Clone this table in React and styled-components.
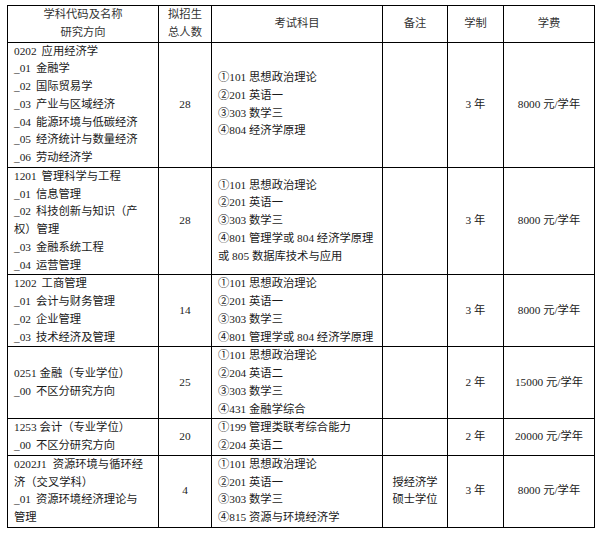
import React from 'react';
import styled, { createGlobalStyle } from 'styled-components';

const GlobalStyle = createGlobalStyle`
  html, body {
    margin: 0;
    padding: 0;
    background: #fff;
  }
  body {
    font-family: "Liberation Serif", "Noto Sans CJK SC", serif;
    color: #1a1a1a;
  }
`;

const Page = styled.div`
  padding: 5px 0 0 7px;
`;

const Table = styled.table`
  border-collapse: collapse;
  table-layout: fixed;
  width: 587px;
  font-size: 11.3px;
  line-height: 17.75px;
`;

const HeadCell = styled.th`
  border: 1px solid #000;
  padding: 0;
  font-weight: normal;
  text-align: center;
  vertical-align: middle;
  color: #333;
  font-family: "Liberation Sans", "Noto Sans CJK SC", sans-serif;
`;

const Cell = styled.td`
  border: 1px solid #000;
  padding: ${(p) => (p.$left ? '0 0 0 6px' : '0')};
  text-align: ${(p) => (p.$left ? 'left' : 'center')};
  vertical-align: middle;
  white-space: nowrap;
  overflow: hidden;
`;

const Line = styled.div`
  height: 17.75px;
`;

const Gap = styled.span`
  display: inline-block;
  width: ${(p) => p.$w || 3}px;
`;

const rows = [
  {
    major: [
      ['0202', '应用经济学', 5],
      ['_01', '金融学', 5],
      ['_02', '国际贸易学', 5],
      ['_03', '产业与区域经济', 5],
      ['_04', '能源环境与低碳经济', 5],
      ['_05', '经济统计与数量经济', 5],
      ['_06', '劳动经济学', 5],
    ],
    count: '28',
    exams: ['①101 思想政治理论', '②201 英语一', '③303 数学三', '④804 经济学原理'],
    note: [],
    years: '3 年',
    fee: '8000 元/学年',
  },
  {
    major: [
      ['1201', '管理科学与工程', 5],
      ['_01', '信息管理', 5],
      ['_02', '科技创新与知识（产', 5],
      ['', '权）管理', 0],
      ['_03', '金融系统工程', 5],
      ['_04', '运营管理', 5],
    ],
    count: '28',
    exams: [
      '①101 思想政治理论',
      '②201 英语一',
      '③303 数学三',
      '④801 管理学或 804 经济学原理',
      '或 805 数据库技术与应用',
    ],
    note: [],
    years: '3 年',
    fee: '8000 元/学年',
  },
  {
    major: [
      ['1202', '工商管理', 5],
      ['_01', '会计与财务管理', 5],
      ['_02', '企业管理', 5],
      ['_03', '技术经济及管理', 5],
    ],
    count: '14',
    exams: ['①101 思想政治理论', '②201 英语一', '③303 数学三', '④801 管理学或 804 经济学原理'],
    note: [],
    years: '3 年',
    fee: '8000 元/学年',
  },
  {
    major: [
      ['0251', '金融（专业学位）', 3],
      ['_00', '不区分研究方向', 5],
    ],
    count: '25',
    exams: ['①101 思想政治理论', '②204 英语二', '③303 数学三', '④431 金融学综合'],
    note: [],
    years: '2 年',
    fee: '15000 元/学年',
  },
  {
    major: [
      ['1253', '会计（专业学位）', 3],
      ['_00', '不区分研究方向', 5],
    ],
    count: '20',
    exams: ['①199 管理类联考综合能力', '②204 英语二'],
    note: [],
    years: '2 年',
    fee: '20000 元/学年',
  },
  {
    major: [
      ['0202J1', '资源环境与循环经', 6],
      ['', '济（交叉学科）', 0],
      ['_01', '资源环境经济理论与', 5],
      ['', '管理', 0],
    ],
    count: '4',
    exams: ['①101 思想政治理论', '②201 英语一', '③303 数学三', '④815 资源与环境经济学'],
    note: ['授经济学', '硕士学位'],
    years: '3 年',
    fee: '8000 元/学年',
  },
];

function MajorLines({ lines }) {
  return lines.map(([code, name, gap], i) => (
    <Line key={i}>
      {code}
      {code && <Gap $w={gap} />}
      {name}
    </Line>
  ));
}

export default function App() {
  return (
    <Page>
      <GlobalStyle />
      <Table>
        <colgroup>
          <col style={{ width: 151 }} />
          <col style={{ width: 53 }} />
          <col style={{ width: 171 }} />
          <col style={{ width: 65 }} />
          <col style={{ width: 56 }} />
          <col style={{ width: 91 }} />
        </colgroup>
        <thead>
          <tr>
            <HeadCell>
              <Line>学科代码及名称</Line>
              <Line>研究方向</Line>
            </HeadCell>
            <HeadCell>
              <Line>拟招生</Line>
              <Line>总人数</Line>
            </HeadCell>
            <HeadCell>考试科目</HeadCell>
            <HeadCell>备注</HeadCell>
            <HeadCell>学制</HeadCell>
            <HeadCell>学费</HeadCell>
          </tr>
        </thead>
        <tbody>
          {rows.map((r, i) => (
            <tr key={i}>
              <Cell $left>
                <MajorLines lines={r.major} />
              </Cell>
              <Cell>{r.count}</Cell>
              <Cell $left>
                {r.exams.map((e) => (
                  <Line key={e}>{e}</Line>
                ))}
              </Cell>
              <Cell>
                {r.note.map((n) => (
                  <Line key={n}>{n}</Line>
                ))}
              </Cell>
              <Cell>{r.years}</Cell>
              <Cell>{r.fee}</Cell>
            </tr>
          ))}
        </tbody>
      </Table>
    </Page>
  );
}
